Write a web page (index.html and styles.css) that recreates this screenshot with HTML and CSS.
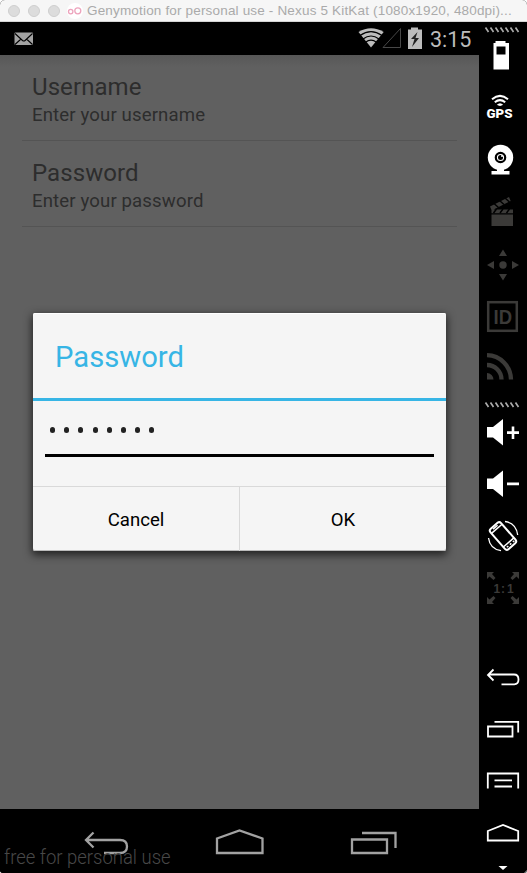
FILE: index.html
```html
<!DOCTYPE html>
<html lang="en">
<head>
<meta charset="utf-8">
<title>Genymotion for personal use</title>
<link rel="stylesheet" href="styles.css">
</head>
<body>
<div class="window">
  <header class="titlebar">
    <span class="light"></span><span class="light"></span><span class="light"></span>
    <svg class="logo" viewBox="66 3 18 16" width="18" height="16"><circle cx="75" cy="11" r="8" fill="#fff"/><g fill="none" stroke="#eda4bd" stroke-width="1.3"><circle cx="70.7" cy="11.6" r="2.2"/><circle cx="77.8" cy="10.8" r="3"/></g></svg>
    <h1 class="caption">Genymotion for personal use - Nexus 5 KitKat (1080x1920, 480dpi)...</h1>
  </header>
  <div class="main">
    <div class="phone">
      <div class="status">
        <svg class="mail" viewBox="14 32 20 14" width="20" height="14"><rect x="14.5" y="32.5" width="18.5" height="12.5" rx="1" fill="#a2a2a2"/><path d="M15 33.500l7.500 7q1.300 1 2.600 0l7.400-7M15 44.500l6-5.500M32.500 44.500l-6-5.500" fill="none" stroke="#000" stroke-width="1.100"/></svg>
        <svg class="signals" viewBox="357 22 68 33" width="68" height="33">
          <path d="M371 47.500L358.500 32Q371 24.500 383.700 32Z" fill="#bcbcbc"/>
          <g fill="none" stroke="#000" stroke-width="1.200"><path d="M360 35.500Q371 27.800 382 35.500"/><path d="M363 39Q371 33 379 39"/><path d="M365.500 42.300Q371 38 376.500 42.300"/></g>
          <path d="M400.500 28.500V47.500H383Z" fill="none" stroke="#484848"/>
          <path d="M408 29.500h3V27.500h7v2h4V49h-14z" fill="#bcbcbc"/>
          <path d="M417.500 32l-6.500 7h3.500l-2.500 8 7-9h-3.500z" fill="#222"/>
        </svg>
        <span class="clock">3:15</span>
      </div>
      <div class="screen">
        <div class="pref"><div class="name">Username</div><div class="hint">Enter your username</div></div>
        <div class="pref"><div class="name">Password</div><div class="hint">Enter your password</div></div>
        <div class="dialog">
          <h2 class="title">Password</h2>
          <div class="field"><i></i><i></i><i></i><i></i><i></i><i></i><i></i><i></i></div>
          <div class="buttons"><div class="button">Cancel</div><div class="button">OK</div></div>
        </div>
      </div>
      <nav class="nav">
        <svg viewBox="0 809 479 64" width="479" height="64" fill="none" stroke="#a2a2a2" stroke-width="2.300">
          <path d="M93.500 832.500L86 840l7.500 7.500M86 840H120Q127 840 127 846.500T120 853H104"/>
          <path d="M217 853V838.500L239.500 830.500 262.500 838.500V853Z"/>
          <path d="M352 839.500H387V853H352ZM362 833H395.500V848"/>
        </svg>
        <span class="watermark">free for personal use</span>
      </nav>
    </div>
    <aside class="tools">
      <svg viewBox="479 22 48 13" width="48" height="13"><path class="grip" d="M485.500 27.500l3 4.500m2-4.500l3 4.500m2-4.500l3 4.500m2-4.500l3 4.500m2-4.500l3 4.500m2-4.500l3 4.500m2-4.500l3 4.500"/></svg>
      <svg viewBox="479 35 48 45" width="48" height="45"><path fill="#fff" fill-rule="evenodd" d="M493.500 43h2V41h10v2h3.500V69.500H493.500ZM496.500 46.500V54.500H505.500V46.500Z"/></svg>
      <svg viewBox="479 80 48 55" width="48" height="55"><g fill="none" stroke="#fff" stroke-width="2"><path d="M492 99.300Q500 92.500 508 99.300M494.800 102.300Q500 98 505.200 102.300"/></g><path d="M496.800 104.800Q500 101.500 503.200 104.800Q500 107 496.800 104.800" fill="#fff"/><text class="gps" x="486.500" y="117.800" textLength="26" lengthAdjust="spacingAndGlyphs">GPS</text></svg>
      <svg viewBox="479 135 48 55" width="48" height="55"><circle cx="500.500" cy="157.500" r="12.700" fill="#fff"/><circle cx="500.500" cy="157.500" r="4.700" fill="#fff" stroke="#000" stroke-width="2.200"/><circle cx="500.500" cy="157.500" r="2.500" fill="#000"/><circle cx="502" cy="156" r="1" fill="#fff"/><path fill="#fff" d="M497 169h7v2h5.500v3.500h-18V171h5.500z"/></svg>
      <svg viewBox="479 190 48 50" width="48" height="50" fill="#3b3a38"><path d="M491.500 214.500h21.500v11.500h-21.500zM491.500 209.500h21.500v3.800h-21.500zM490 206.500l19-9.500 1.700 4-19 9.500z"/><path stroke="#000" stroke-width="1.500" d="M493.500 213l3-4M500 213l3-4M506.500 213l3-4M494 203.500l4.500 4M499.500 200.500l4.500 4M505 198l4.500 4"/></svg>
      <svg viewBox="479 240 48 50" width="48" height="50" fill="#3b3a38"><circle cx="503" cy="265" r="3.700"/><path d="M503 249.500l4 6.500h-8zM503 280.500l4-6.500h-8zM487 265l7-4v8zM519 265l-7-4v8z"/></svg>
      <svg viewBox="479 290 48 50" width="48" height="50" fill="#3b3a38"><rect x="488.200" y="302.200" width="28.600" height="28.600" fill="none" stroke="#3b3a38" stroke-width="2.500"/><text class="ident" x="493.500" y="324" textLength="18.500" lengthAdjust="spacingAndGlyphs">ID</text></svg>
      <svg viewBox="479 340 48 55" width="48" height="55"><g fill="none" stroke="#3b3a38" stroke-width="4.300"><path d="M487 355.200A24.500 24.500 0 0 1 511 379.500M487 365A14.500 14.500 0 0 1 501.500 379.500"/></g><path d="M487 373a6.500 6.500 0 0 1 6.500 6.500H487z" fill="#3b3a38"/></svg>
      <svg viewBox="479 395 48 15" width="48" height="15"><path class="grip" d="M485.500 402.500l3 4.500m2-4.500l3 4.500m2-4.500l3 4.500m2-4.500l3 4.500m2-4.500l3 4.500m2-4.500l3 4.500m2-4.500l3 4.500"/></svg>
      <svg viewBox="479 410 48 50" width="48" height="50" fill="#fff"><path d="M487 427h6l10-8v26.500l-10-8h-6zM507 431.300h12v2.700h-12zM511.700 426.500h2.600V439h-2.600z"/></svg>
      <svg viewBox="479 460 48 50" width="48" height="50" fill="#fff"><path d="M487 478.500h6l10-8V497l-10-8h-6zM507 482.500h12v2.700h-12z"/></svg>
      <svg viewBox="479 510 48 50" width="48" height="50" fill="none" stroke="#fff" stroke-width="2"><g transform="rotate(-41 503 536)"><rect x="496" y="522.500" width="14" height="27" rx="2.500"/><path d="M496 526.500h14M496 544.500h14M500 524.300h6M498.500 547h2m2 0h2m2 0h2" stroke-width="1.500"/></g><path d="M505 521.500Q516 523 517.700 535M488.500 538Q490 549 501 550.700" stroke-width="1.300"/></svg>
      <svg viewBox="479 560 48 50" width="48" height="50" fill="#3b3a38"><path d="M487 572h7l-2 2 3.500 4-2 2-4-3.500-2.500 2.500zM519 572h-7l2 2-3.500 4 2 2 4-3.500 2.500 2.500zM487 604h7l-2-2 3.500-4-2-2-4 3.500-2.500-2.500zM519 604h-7l2-2-3.500-4 2-2 4 3.500 2.500-2.500z"/><g class="ratio"><text x="493.500" y="592.500">1</text><text x="501" y="592.500">:</text><text x="507" y="592.500">1</text></g></svg>
      <svg class="keys" viewBox="479 610 48 263" width="48" height="263" fill="none" stroke="#fff" stroke-width="1.800">
        <path d="M493.500 669.500L488 675l5.500 5.500M488 674.500H514Q518.500 674.500 518.500 679.500T514 684.300H501.500"/>
        <path d="M488 726.500H512.500V736.500H488ZM494.500 721.800H518.200V732.500"/>
        <path d="M487.800 788.500V773.500H518.200V788.500M494.500 780.300H512M494.500 786.500H512"/>
        <path d="M487.800 840.500V831L503 825 518.200 831V840.500Z"/>
        <path d="M498.500 866h9l-4.500 4z" fill="#fff" stroke="none"/>
        <path d="M527 870v3h-3z" fill="#aaa" stroke="none"/>
      </svg>
    </aside>
  </div>
</div>
</body>
</html>
```
FILE: styles.css
```css
* { box-sizing: border-box; }
body { margin: 0; background: #fff; font-family: Roboto, sans-serif; }
.window { width: 527px; height: 873px; overflow: hidden; border-radius: 5px 5px 3px 3px; background: #000; }
.titlebar { height: 22px; display: flex; align-items: center; padding-left: 8px; background: #f6f6f6; border-bottom: 1px solid #d4d4d4; }
.light { width: 12px; height: 12px; margin-right: 8px; border-radius: 50%; background: #dcdcdc; border: 1px solid #cecece; }
.logo { margin: 0 3px 0 -2px; }
.caption { margin: 0; padding-top: 1px; font: 400 13.5px/20px "Liberation Sans", sans-serif; color: #aaa; white-space: nowrap; letter-spacing: 0.17px; }
.main { display: flex; height: 851px; }
.phone { width: 479px; }
.status { height: 33px; display: flex; align-items: center; padding: 0 9px 0 14px; color: #bcbcbc; background: #000; }
.signals { margin-left: auto; }
.clock { width: 40px; margin-left: 5px; font-size: 21.5px; line-height: 33px; padding-top: 1px; white-space: nowrap; }
.screen { position: relative; height: 754px; padding: 0 22px; background: linear-gradient(#575757, #606060 12px); }
.pref { height: 86px; padding: 17px 10px 0; border-bottom: 1px solid #545454; color: #2d2d2d; }
.name { font-size: 24px; line-height: 30px; letter-spacing: 0.08px; }
.hint { font-size: 18.6px; line-height: 26px; letter-spacing: 0.13px; }
.dialog { position: absolute; left: 33px; top: 258px; width: 413px; height: 238px; border-radius: 2px; background: #f5f5f5; box-shadow: 0 3px 9px 1px rgba(0, 0, 0, .65), inset 0 1px #fff, inset 0 -1px #bbb; }
.title { height: 88px; margin: 0; padding-left: 22px; border-bottom: 3px solid #37b5e5; color: #37b5e5; font-size: 29.2px; font-weight: 400; line-height: 88px; }
.field { height: 56px; margin: 0 12px 29px; padding: 26px 0 0 5px; display: flex; gap: 9.2px; border-bottom: 3px solid #000; border-image: linear-gradient(#aaa 33%, #000 33%) 3; border-width: 0 0 3px; border-style: solid; }
.field i { width: 5px; height: 6px; border-radius: 2.5px; background: #222; }
.buttons { height: 65px; display: flex; border-top: 1px solid #d9d9d9; }
.button { flex: 1; text-align: center; font-size: 18.6px; line-height: 67px; height: 64px; color: #000; }
.button + .button { border-left: 1px solid #d9d9d9; }
.nav { position: relative; height: 64px; background: #000; }
.nav svg { display: block; }
.watermark { position: absolute; left: 4px; top: 36px; font-size: 21px; line-height: 25px; font-weight: 300; color: #484848; white-space: nowrap; transform: scaleX(.88); transform-origin: 0 0; }
.tools { width: 48px; background: #000; }
.tools svg { display: block; }
.grip { fill: none; stroke: #aaa; stroke-width: 1.7; }
.gps { font: 900 12px Roboto, sans-serif; fill: #fff; }
.ident { font: 700 20px "Liberation Sans", sans-serif; }
.ratio { font: 700 12px "Liberation Sans", sans-serif; }
```
